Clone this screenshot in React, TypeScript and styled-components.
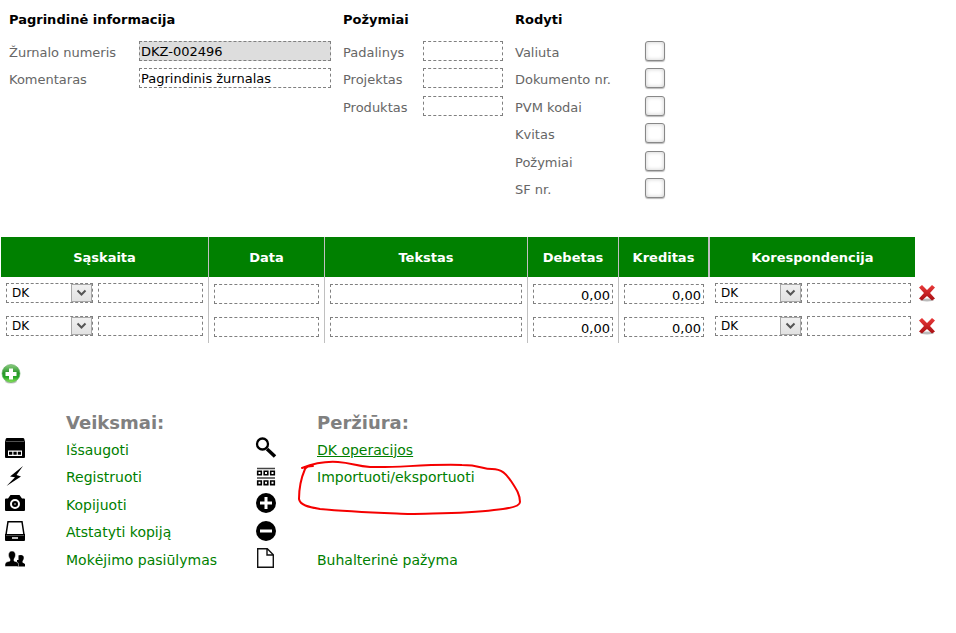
import React from "react";
import styled, { createGlobalStyle } from "styled-components";

const GlobalStyle = createGlobalStyle`
  *, *::before, *::after { box-sizing: border-box; }
  body {
    margin: 0;
    background: #fff;
    color: #000;
    font-family: Verdana, "DejaVu Sans", sans-serif;
    font-size: 13px;
  }
`;

const Page = styled.main`
  padding: 10px 0 24px;
`;

const Summary = styled.div`
  display: flex;
  align-items: flex-start;
  gap: 12px;
  padding: 0 9px;
`;

const Group = styled.section``;

const GroupTitle = styled.h2`
  margin: 0 0 8px;
  font-size: 13px;
  line-height: 20px;
  font-weight: bold;
`;

const Fields = styled.div<{ $label: number }>`
  display: grid;
  grid-template-columns: ${(p) => p.$label}px auto;
  grid-template-rows: repeat(3, 27px 28px);
  align-items: start;
  padding-top: 3px;
`;

const Label = styled.label`
  color: #666;
  line-height: 24px;
  white-space: nowrap;
`;

const TextInput = styled.input<{ $width: number }>`
  display: block;
  width: ${(p) => p.$width}px;
  height: 20px;
  margin: 0;
  padding: 0 1px;
  border: 1px dashed #808080;
  border-radius: 0;
  outline: 0;
  background: #fff;
  color: #000;
  font: inherit;
  &:read-only { background: #ddd; }
`;

const NumberInput = styled(TextInput)`
  padding: 2px 2px 0;
  text-align: right;
`;

const Checkbox = styled.input`
  appearance: none;
  display: block;
  width: 20px;
  height: 20px;
  margin: 0;
  border: 1px solid #888;
  border-radius: 3px;
  background: #fff;
  box-shadow: inset 0 0 4px #ccc, 0 1px 1px #bbb;
  &:checked { background: #008000; }
`;

const Ledger = styled.table`
  margin: 31px 0 0 1px;
  border-spacing: 0;
`;

const HeadCell = styled.th<{ $edge?: number }>`
  height: 40px;
  padding: 0;
  background: #008000;
  color: #fff;
  border-right: ${(p) => p.$edge ?? 1}px solid #c0c0c0;
  font-weight: bold;
`;

const Cell = styled.td<{ $plain?: boolean; $drop?: boolean }>`
  height: 33px;
  padding: ${(p) => (p.$drop ? 7 : 6)}px 5px 0;
  vertical-align: top;
  border-right: ${(p) => (p.$plain ? 0 : 1)}px solid #c0c0c0;
`;

const CreditCell = styled(Cell)`
  padding-right: 6px;
`;

const LastCell = styled(Cell)`
  padding-right: 4px;
`;

const DeleteCell = styled(Cell)`
  padding-left: 3px;
`;

const AccountField = styled.div`
  display: flex;
  gap: 5px;
`;

const SelectBox = styled.div`
  display: grid;
  width: 87px;
  height: 20px;
  grid-template-columns: 1fr 21px;
  align-items: center;
  border: 1px dashed #808080;
`;

const Select = styled.select`
  appearance: none;
  grid-area: 1 / 1 / 2 / 3;
  width: 100%;
  height: 18px;
  margin: 0;
  padding: 0 0 0 5px;
  border: 0;
  outline: 0;
  background: transparent;
  color: #000;
  font: inherit;
  font-size: 12px;
`;

const Arrow = styled.span`
  grid-area: 1 / 2;
  display: grid;
  place-items: center;
  height: 18px;
  border: 1px solid #a8a8a8;
  background: linear-gradient(#f0f0f0, #e2e2e2);
  pointer-events: none;
`;

const IconButton = styled.button`
  display: block;
  padding: 0;
  border: 0;
  background: none;
  cursor: pointer;
  svg { display: block; }
`;

const AddButton = styled(IconButton)`
  margin: 21px 0 0 1px;
`;

const Menus = styled.div`
  display: flex;
  margin-top: 28px;
  padding-left: 4px;
`;

const Menu = styled.nav<{ $width: number }>`
  min-width: ${(p) => p.$width}px;
`;

const MenuTitle = styled.h3`
  margin: 0;
  padding-left: 62px;
  color: #808080;
  font-size: 18px;
  line-height: 22px;
  font-weight: bold;
`;

const MenuList = styled.ul`
  display: grid;
  grid-template-rows: 28px 27px 28px 27px 28px;
  margin: 0;
  padding: 0;
  list-style: none;
`;

const MenuItem = styled.li`
  position: relative;
  display: grid;
  grid-template-columns: 22px auto;
  justify-content: start;
  column-gap: 40px;
  align-items: center;
  svg { display: block; }
`;

const MenuLink = styled.a<{ $underlined?: boolean }>`
  padding-top: 3px;
  color: #008000;
  font-size: 14px;
  line-height: 24px;
  white-space: nowrap;
  text-decoration: ${(p) => (p.$underlined ? "underline" : "none")};
  &:hover { text-decoration: underline; }
`;

const Marker = styled.svg`
  position: absolute;
  left: 43px;
  top: -3px;
  pointer-events: none;
`;

type IconName =
  | "save" | "bolt" | "camera" | "tray" | "people"
  | "search" | "grid" | "plus" | "minus" | "file";

const shapes: Record<IconName, React.ReactNode> = {
  save: (
    <>
      <path d="M3 1h16q1 0 1.300 1L21 5v15q0 1-1 1H2q-1 0-1-1V5l.7-3Q2 1 3 1" />
      <path d="M2 4.500h18" stroke="#666" strokeWidth=".8" />
      <path d="M4 13.500h14v5.500H4z" fill="#fff" />
      <path d="M5 14.700h3.300v3H5zM9.400 14.700h3.300v3H9.400zM13.800 14.700H17v3h-3.200z" />
    </>
  ),
  bolt: <path d="M19 1 6 11.500l5 .7L2.500 21 17 11.500l-4.500-1.500z" />,
  camera: (
    <>
      <path d="M6.500 3h9L18 6.500h2q1 0 1 1V18q0 1-1 1H2q-1 0-1-1V7.500q0-1 1-1h2z" />
      <circle cx="11" cy="12" r="4" fill="none" stroke="#fff" strokeWidth="2" />
      <circle cx="11" cy="12" r="1" fill="#888" />
    </>
  ),
  tray: (
    <>
      <path d="M4 1.700h14l2 13H2z" fill="#fff" stroke="#000" strokeWidth="1.500" />
      <path d="M1 14h20v6q0 1-1 1H2q-1 0-1-1z" />
      <path d="M2 15.500h18" stroke="#777" strokeWidth=".6" />
      <path d="M8 18h6" stroke="#fff" strokeWidth="1.500" />
    </>
  ),
  people: (
    <>
      <path d="M17 8c3.400 0 3.400 4 1.500 6v1.500L21 17v2.500h-8V8.500z" />
      <path
        d="M8 4c4.500 0 4 6 2 8v2l3 1q1.500.5 1.500 2.500v2H1v-2Q1 16 2.500 15L6 14v-2C4 10 3.500 4 8 4"
        stroke="#fff" strokeWidth=".5"
      />
      <path d="M13.500 6.500v6.500" stroke="#fff" strokeWidth="2" />
    </>
  ),
  search: (
    <>
      <circle cx="7.500" cy="7" r="5.500" fill="none" stroke="#000" strokeWidth="2.300" />
      <path d="m12 12 8 7.500" stroke="#000" strokeWidth="3.500" />
    </>
  ),
  grid: (
    <>
      <path d="M2 3.500h18M2 13h18" stroke="#444" strokeWidth="1.400" />
      <path
        d="M2.700 6.200h3.600v3.600H2.700zM9.200 6.200h3.600v3.600H9.200zM15.700 6.200h3.600v3.600h-3.600zM2.700 16h3.600v3.600H2.700zM9.200 16h3.600v3.600H9.200zM15.700 16h3.600v3.600h-3.600z"
        fill="#fff" stroke="#000" strokeWidth="1.600"
      />
    </>
  ),
  plus: (
    <>
      <circle cx="11" cy="11" r="10" />
      <path d="M11 5v12M5 11h12" stroke="#fff" strokeWidth="3" />
    </>
  ),
  minus: (
    <>
      <circle cx="11" cy="11" r="10" />
      <path d="M5 11h12" stroke="#fff" strokeWidth="3" />
    </>
  ),
  file: (
    <path d="M2.700 1.700h9.600l6 6v12.600H2.700zM12 2v6h6" fill="#fff" stroke="#111" strokeWidth="1.400" />
  ),
};

const Icon = ({ name }: { name: IconName }) => (
  <svg width="22" height="22" viewBox="0 0 22 22" aria-hidden="true">
    {shapes[name]}
  </svg>
);

const DeleteIcon = () => (
  <svg width="18" height="18" viewBox="0 0 18 18" aria-hidden="true">
    <defs>
      <linearGradient id="cross" x1="0" y1="0" x2="0" y2="1">
        <stop offset="0" stopColor="#ea3a3a" />
        <stop offset="1" stopColor="#a80e12" />
      </linearGradient>
    </defs>
    <ellipse cx="9" cy="16" rx="7" ry="1.500" fill="#bbb" />
    <path d="m4 1 5 5 5-5 3 2.500L12 9l5 5.500-3 2-5-4.500-5 4.500-3-2L6 9 1 3.500z" fill="url(#cross)" />
  </svg>
);

const AddIcon = () => (
  <svg width="20" height="20" viewBox="0 0 20 20" aria-hidden="true">
    <defs>
      <linearGradient id="ball" x1="0" y1="0" x2="0" y2="1">
        <stop offset="0" stopColor="#8fce83" />
        <stop offset=".45" stopColor="#2c982c" />
        <stop offset=".7" stopColor="#26a526" />
        <stop offset="1" stopColor="#8ee85a" />
      </linearGradient>
    </defs>
    <ellipse cx="10" cy="17.500" rx="6" ry="2" fill="#ccc" />
    <circle cx="10" cy="9.500" r="9" fill="url(#ball)" stroke="#58a858" strokeWidth=".6" />
    <path d="M10 4.500v11M4.500 10h11" stroke="#fff" strokeWidth="4" />
  </svg>
);

const AccountPicker = ({ name, width }: { name: string; width: number }) => (
  <AccountField>
    <SelectBox>
      <Select aria-label={`${name} tipas`} defaultValue="DK">
        <option>DK</option>
      </Select>
      <Arrow>
        <svg width="11" height="8" viewBox="0 0 11 8" aria-hidden="true">
          <path d="m1.500 1.500 4 4 4-4" fill="none" stroke="#555" strokeWidth="2" />
        </svg>
      </Arrow>
    </SelectBox>
    <TextInput $width={width} aria-label={name} />
  </AccountField>
);

const LedgerRow = () => (
  <tr>
    <Cell><AccountPicker name="Sąskaita" width={105} /></Cell>
    <Cell $drop><TextInput $width={105} aria-label="Data" /></Cell>
    <Cell $drop><TextInput $width={192} aria-label="Tekstas" /></Cell>
    <Cell $drop><NumberInput $width={80} aria-label="Debetas" defaultValue="0,00" /></Cell>
    <CreditCell $drop $plain><NumberInput $width={80} aria-label="Kreditas" defaultValue="0,00" /></CreditCell>
    <LastCell $plain><AccountPicker name="Korespondencija" width={104} /></LastCell>
    <DeleteCell $drop $plain>
      <IconButton type="button" aria-label="Ištrinti eilutę"><DeleteIcon /></IconButton>
    </DeleteCell>
  </tr>
);

const toggles = ["Valiuta", "Dokumento nr.", "PVM kodai", "Kvitas", "Požymiai", "SF nr."];

const actions: { icon: IconName; text: string }[] = [
  { icon: "save", text: "Išsaugoti" },
  { icon: "bolt", text: "Registruoti" },
  { icon: "camera", text: "Kopijuoti" },
  { icon: "tray", text: "Atstatyti kopiją" },
  { icon: "people", text: "Mokėjimo pasiūlymas" },
];

const views: { icon: IconName; text?: string; underlined?: boolean; marked?: boolean }[] = [
  { icon: "search", text: "DK operacijos", underlined: true },
  { icon: "grid", text: "Importuoti/eksportuoti", marked: true },
  { icon: "plus" },
  { icon: "minus" },
  { icon: "file", text: "Buhalterinė pažyma" },
];

export default function App() {
  return (
    <>
      <GlobalStyle />
      <Page>
        <Summary>
          <Group>
            <GroupTitle>Pagrindinė informacija</GroupTitle>
            <Fields $label={130}>
              <Label htmlFor="number">Žurnalo numeris</Label>
              <TextInput id="number" $width={192} readOnly value="DKZ-002496" />
              <Label htmlFor="comment">Komentaras</Label>
              <TextInput id="comment" $width={192} defaultValue="Pagrindinis žurnalas" />
            </Fields>
          </Group>
          <Group>
            <GroupTitle>Požymiai</GroupTitle>
            <Fields $label={80}>
              {["Padalinys", "Projektas", "Produktas"].map((text) => (
                <React.Fragment key={text}>
                  <Label htmlFor={text}>{text}</Label>
                  <TextInput id={text} $width={80} />
                </React.Fragment>
              ))}
            </Fields>
          </Group>
          <Group>
            <GroupTitle>Rodyti</GroupTitle>
            <Fields $label={130}>
              {toggles.map((text, i) => (
                <React.Fragment key={text}>
                  <Label htmlFor={`show-${i}`}>{text}</Label>
                  <Checkbox id={`show-${i}`} type="checkbox" />
                </React.Fragment>
              ))}
            </Fields>
          </Group>
        </Summary>

        <Ledger>
          <thead>
            <tr>
              <HeadCell>Sąskaita</HeadCell>
              <HeadCell>Data</HeadCell>
              <HeadCell>Tekstas</HeadCell>
              <HeadCell>Debetas</HeadCell>
              <HeadCell $edge={2}>Kreditas</HeadCell>
              <HeadCell $edge={0}>Korespondencija</HeadCell>
            </tr>
          </thead>
          <tbody>
            <LedgerRow />
            <LedgerRow />
          </tbody>
        </Ledger>

        <AddButton type="button" aria-label="Pridėti eilutę"><AddIcon /></AddButton>

        <Menus>
          <Menu $width={251}>
            <MenuTitle>Veiksmai:</MenuTitle>
            <MenuList>
              {actions.map((item) => (
                <MenuItem key={item.icon}>
                  <Icon name={item.icon} />
                  <MenuLink href="#">{item.text}</MenuLink>
                </MenuItem>
              ))}
            </MenuList>
          </Menu>
          <Menu $width={251}>
            <MenuTitle>Peržiūra:</MenuTitle>
            <MenuList>
              {views.map((item) => (
                <MenuItem key={item.icon}>
                  <Icon name={item.icon} />
                  {item.text && (
                    <MenuLink href="#" $underlined={item.underlined}>{item.text}</MenuLink>
                  )}
                  {item.marked && (
                    <Marker width="226" height="56" viewBox="0 0 226 56" aria-hidden="true">
                      <path
                        d="M4 9C14 5 26 2 40 3s18 4 32 5c30 1 50-3 92-2 18 0 20 4 30 4 10 0 14 5 19 12 6 9 9 14 9 21 0 5-14 7-26 8-30 4-60 3-84 4-24-1-60-2-90-5C10 48 2 46 1 40 1 28 4 17 7 10c1-2 4-3 8-3"
                        fill="none" stroke="#f50000" strokeWidth="2" strokeLinecap="round"
                      />
                    </Marker>
                  )}
                </MenuItem>
              ))}
            </MenuList>
          </Menu>
        </Menus>
      </Page>
    </>
  );
}
